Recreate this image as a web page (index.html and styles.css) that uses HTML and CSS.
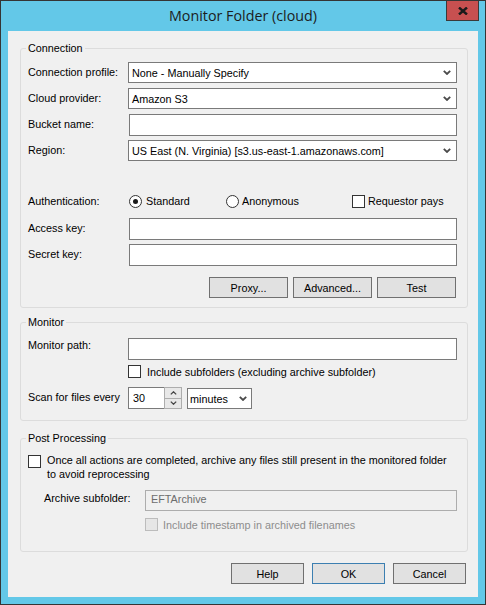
FILE: index.html
```html
<!DOCTYPE html>
<html>
<head>
<meta charset="utf-8">
<title>Monitor Folder (cloud)</title>
<link rel="stylesheet" href="styles.css">
</head>
<body>
<div class="window">
  <div class="titlebar">
    <div class="title">Monitor Folder (cloud)</div>
    <div class="close">
      <svg width="10" height="8" viewBox="0 0 10 8"><path d="M1 0.5 L9 7.5 M9 0.5 L1 7.5" stroke="#1a1a1a" stroke-width="2.4" fill="none"/></svg>
    </div>
  </div>
  <div class="client">
    <fieldset class="group g-conn">
      <legend>Connection</legend>
      <div class="row">
        <span class="lbl">Connection profile:</span>
        <div class="select"><span class="val">None - Manually Specify</span><svg class="chev" width="8" height="5" viewBox="0 0 8 5"><polyline points="0.8,0.8 4,4 7.2,0.8" fill="none" stroke="#4a4a4a" stroke-width="1.8"/></svg></div>
      </div>
      <div class="row mt4">
        <span class="lbl">Cloud provider:</span>
        <div class="select"><span class="val">Amazon S3</span><svg class="chev" width="8" height="5" viewBox="0 0 8 5"><polyline points="0.8,0.8 4,4 7.2,0.8" fill="none" stroke="#4a4a4a" stroke-width="1.8"/></svg></div>
      </div>
      <div class="row mt4">
        <span class="lbl">Bucket name:</span>
        <div class="input shift"></div>
      </div>
      <div class="row mt4">
        <span class="lbl">Region:</span>
        <div class="select"><span class="val">US East (N. Virginia) [s3.us-east-1.amazonaws.com]</span><svg class="chev" width="8" height="5" viewBox="0 0 8 5"><polyline points="0.8,0.8 4,4 7.2,0.8" fill="none" stroke="#4a4a4a" stroke-width="1.8"/></svg></div>
      </div>
      <div class="row auth">
        <span class="lbl">Authentication:</span>
        <div class="opt o-std"><span class="radio on"></span><span>Standard</span></div>
        <div class="opt o-anon"><span class="radio"></span><span>Anonymous</span></div>
        <div class="opt o-req"><span class="cb"></span><span>Requestor pays</span></div>
      </div>
      <div class="row mt6">
        <span class="lbl">Access key:</span>
        <div class="input shift"></div>
      </div>
      <div class="row mt4">
        <span class="lbl">Secret key:</span>
        <div class="input shift"></div>
      </div>
      <div class="btnrow">
        <div class="btn">Proxy...</div>
        <div class="btn">Advanced...</div>
        <div class="btn">Test</div>
      </div>
    </fieldset>

    <fieldset class="group g-mon">
      <legend>Monitor</legend>
      <div class="row">
        <span class="lbl lbl-top">Monitor path:</span>
        <div class="input"></div>
      </div>
      <div class="cbrow sub">
        <span class="cb"></span><span>Include subfolders (excluding archive subfolder)</span>
      </div>
      <div class="row scan">
        <span class="lbl">Scan for files every</span>
        <div class="spin">
          <div class="spin-edit">30</div>
          <div class="spin-btns">
            <div class="spin-btn"><svg width="7" height="4" viewBox="0 0 7 4"><polyline points="0.8,3.4 3.5,0.8 6.2,3.4" fill="none" stroke="#444" stroke-width="1.3"/></svg></div>
            <div class="spin-btn"><svg width="7" height="4" viewBox="0 0 7 4"><polyline points="0.8,0.6 3.5,3.2 6.2,0.6" fill="none" stroke="#444" stroke-width="1.3"/></svg></div>
          </div>
        </div>
        <div class="select minutes"><span class="val">minutes</span><svg class="chev" width="8" height="5" viewBox="0 0 8 5"><polyline points="0.8,0.8 4,4 7.2,0.8" fill="none" stroke="#4a4a4a" stroke-width="1.8"/></svg></div>
      </div>
    </fieldset>

    <fieldset class="group g-post">
      <legend>Post Processing</legend>
      <div class="cbrow archive">
        <span class="cb"></span>
        <span class="wrap">Once all actions are completed, archive any files still present in the monitored folder to avoid reprocessing</span>
      </div>
      <div class="row arch-row">
        <span class="lbl lbl-arch">Archive subfolder:</span>
        <div class="input disabled">EFTArchive</div>
      </div>
      <div class="cbrow ts">
        <span class="cb dis"></span><span class="distext">Include timestamp in archived filenames</span>
      </div>
    </fieldset>

    <div class="footer">
      <div class="btn sm">Help</div>
      <div class="btn sm default">OK</div>
      <div class="btn sm">Cancel</div>
    </div>
  </div>
</div>
</body>
</html>
```
FILE: styles.css
```css
html, body {
  margin: 0;
  padding: 0;
  background: #ffffff;
}

body {
  font-family: "Liberation Sans", Arial, sans-serif;
  font-size: 10.8px;
  color: #000;
}

.window {
  width: 486px;
  height: 605px;
  box-sizing: border-box;
  border: 1px solid #353535;
  background: #63c8e8;
  display: flex;
  flex-direction: column;
}

.titlebar {
  height: 30px;
  flex: none;
  display: grid;
  grid-template-columns: 1fr auto 1fr;
  align-items: start;
}

.title {
  grid-column: 2;
  font-family: "Open Sans", "Noto Sans", sans-serif;
  font-size: 14.3px;
  line-height: 29px;
  color: #1c1c1c;
  white-space: nowrap;
}

.close {
  grid-column: 3;
  justify-self: end;
  margin-right: 6px;
  width: 33px;
  height: 20px;
  box-sizing: border-box;
  background: #c75050;
  border: 1px solid #3a3a3a;
  border-top: none;
  display: flex;
  align-items: center;
  justify-content: center;
}

.client {
  flex: 1;
  margin: 0 7px 7px;
  background: #f0f0f0;
  padding: 11px 10px 0 12px;
  display: flex;
  flex-direction: column;
}

.group {
  margin: 0;
  padding: 7px 10px 9px 7px;
  border: 1px solid #dcdcdc;
  border-radius: 3px;
  min-width: 0;
}

.group legend {
  padding: 0 2px;
  margin-left: -2px;
  line-height: 13px;
}

.g-mon {
  margin-top: 8px;
  padding-top: 9px;
  padding-bottom: 11px;
}

.g-post {
  margin-top: 11px;
  padding-top: 9px;
  padding-bottom: 20px;
}

.row {
  display: flex;
  align-items: flex-start;
  height: 22px;
}

.mt4 { margin-top: 4px; }
.mt6 { margin-top: 6px; }

.lbl {
  width: 100px;
  flex: none;
  line-height: 21px;
  white-space: nowrap;
}

.lbl-top { line-height: 14px; }

.select {
  flex: 1;
  height: 21px;
  box-sizing: border-box;
  border: 1px solid #7a7a7a;
  background: #fff;
  display: flex;
  align-items: center;
  justify-content: space-between;
  padding: 0 5px 0 3px;
  white-space: nowrap;
}

.select .val {
  padding-top: 1px;
}

.chev {
  flex: none;
}

.input {
  flex: 1;
  height: 22px;
  box-sizing: border-box;
  border: 1px solid #7a7a7a;
  background: #fff;
}

.input.shift {
  margin-left: 1px;
}

/* authentication row */
.auth {
  margin-top: 28px;
  align-items: center;
}

.opt {
  display: flex;
  align-items: center;
  white-space: nowrap;
}

.o-std {
  width: 97px;
  margin-left: 1px;
  gap: 4px;
}

.o-anon {
  width: 126px;
  gap: 3px;
}

.o-req {
  gap: 3px;
}

.radio {
  width: 13px;
  height: 13px;
  box-sizing: border-box;
  border: 1px solid #333;
  border-radius: 50%;
  background: #fff;
  display: flex;
  align-items: center;
  justify-content: center;
  flex: none;
}

.radio.on::after {
  content: "";
  width: 5px;
  height: 5px;
  border-radius: 50%;
  background: #1a1a1a;
}

.cb {
  width: 13px;
  height: 13px;
  box-sizing: border-box;
  border: 1px solid #333;
  background: #fff;
  flex: none;
}

.cb.dis {
  border-color: #bcbcbc;
  background: #e6e6e6;
}

.distext {
  color: #8d8d8d;
}

.btnrow {
  display: flex;
  justify-content: flex-end;
  gap: 5px;
  margin-top: 11px;
  margin-right: 1px;
}

.btn {
  width: 79px;
  height: 21px;
  box-sizing: border-box;
  border: 1px solid #707070;
  background: #e1e1e1;
  display: flex;
  align-items: center;
  justify-content: center;
  white-space: nowrap;
}

.btn.sm {
  width: 73px;
}

.btn.default {
  border-color: #3c7fb1;
}

/* monitor */
.cbrow {
  display: flex;
  align-items: center;
  gap: 6px;
  white-space: nowrap;
}

.cbrow.sub {
  margin-top: 5px;
  margin-left: 100px;
  height: 13px;
}

.scan {
  margin-top: 9px;
}

.spin {
  display: flex;
  height: 22px;
  flex: none;
}

.spin-edit {
  width: 36px;
  box-sizing: border-box;
  border: 1px solid #7a7a7a;
  border-right: none;
  background: #fff;
  padding-left: 4px;
  line-height: 20px;
}

.spin-btns {
  width: 18px;
  display: flex;
  flex-direction: column;
  box-sizing: border-box;
  border: 1px solid #adadad;
  background: #adadad;
  gap: 1px;
}

.spin-btn {
  flex: 1;
  background: #e8e8e8;
  display: flex;
  align-items: center;
  justify-content: center;
}

.select.minutes {
  flex: none;
  width: 65px;
  margin-left: 5px;
  margin-top: 1px;
  padding: 0 4px 0 2px;
}

/* post processing */
.cbrow.archive {
  align-items: flex-start;
  white-space: normal;
}

.cbrow.archive .cb {
  margin-top: 1px;
}

.wrap {
  line-height: 13.5px;
}

.arch-row {
  margin-top: 9px;
  padding-left: 16px;
}

.lbl-arch {
  width: 101px;
  line-height: 17px;
}

.input.disabled {
  height: 21px;
  background: #f0f0f0;
  border-color: #adadad;
  color: #6d6d6d;
  padding-left: 5px;
  line-height: 17px;
}

.cbrow.ts {
  margin-top: 6px;
  margin-left: 117px;
  gap: 5px;
  height: 13px;
}

.footer {
  display: flex;
  justify-content: flex-end;
  gap: 8px;
  margin-top: 11px;
  padding-right: 2px;
}
```
